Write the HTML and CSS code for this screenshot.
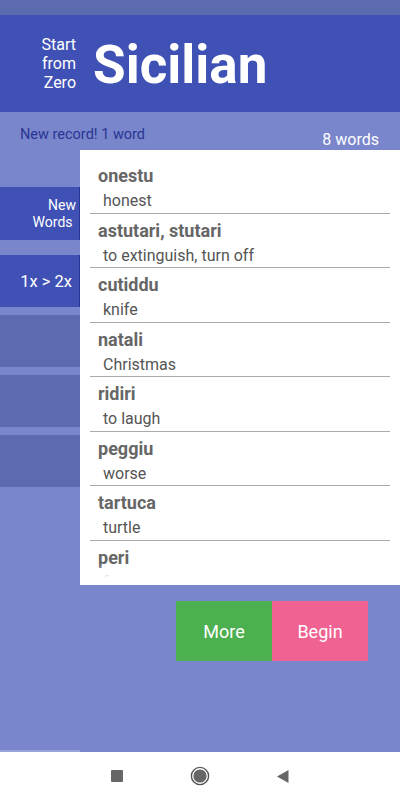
FILE: index.html
```html
<!DOCTYPE html>
<html lang="en">
<head>
    <meta charset="UTF-8">
    <meta name="viewport" content="width=device-width, initial-scale=1.0">
    <title>Start from Zero - Sicilian</title>
    <link rel="stylesheet" href="styles.css">
</head>
<body>
    <div class="status-bar"></div>

    <div class="header">
        <div class="header-small">Start<br>from<br>Zero</div>
        <h1 class="header-title">Sicilian</h1>
    </div>

    <div class="info-row">
        <span class="record">New record! 1 word</span>
        <span class="word-count">8 words</span>
    </div>

    <div class="main">
        <div class="side">
            <div class="tab tab-active tab-first">New<br>Words&nbsp;</div>
            <div class="tab tab-active tab-big">1x &gt; 2x&nbsp;</div>
            <div class="tab"></div>
            <div class="tab"></div>
            <div class="tab"></div>
        </div>

        <div class="content">
            <div class="panel">
                <div class="word-list">
                    <div class="word-item">
                        <div class="word-name">onestu</div>
                        <div class="word-meaning">honest</div>
                    </div>
                    <div class="word-item">
                        <div class="word-name">astutari, stutari</div>
                        <div class="word-meaning">to extinguish, turn off</div>
                    </div>
                    <div class="word-item">
                        <div class="word-name">cutiddu</div>
                        <div class="word-meaning">knife</div>
                    </div>
                    <div class="word-item">
                        <div class="word-name">natali</div>
                        <div class="word-meaning">Christmas</div>
                    </div>
                    <div class="word-item">
                        <div class="word-name">ridiri</div>
                        <div class="word-meaning">to laugh</div>
                    </div>
                    <div class="word-item">
                        <div class="word-name">peggiu</div>
                        <div class="word-meaning">worse</div>
                    </div>
                    <div class="word-item">
                        <div class="word-name">tartuca</div>
                        <div class="word-meaning">turtle</div>
                    </div>
                    <div class="word-item">
                        <div class="word-name">peri</div>
                        <div class="word-meaning">feet</div>
                    </div>
                </div>
            </div>

            <div class="buttons">
                <button class="btn btn-more">More</button>
                <button class="btn btn-begin">Begin</button>
            </div>
        </div>
    </div>

    <!-- android navigation bar -->
    <div class="nav-bar">
        <div class="nav-item">
            <svg width="12" height="12" viewBox="0 0 12 12"><rect x="0" y="0" width="12" height="12" rx="1" fill="#666"/></svg>
        </div>
        <div class="nav-item">
            <svg width="20" height="20" viewBox="0 0 20 20">
                <circle cx="10" cy="10" r="8.6" fill="none" stroke="#555" stroke-width="1.4"/>
                <circle cx="10" cy="10" r="6.6" fill="#666"/>
            </svg>
        </div>
        <div class="nav-item">
            <svg width="12" height="13" viewBox="0 0 12 13"><path d="M0 6.5 L11.5 0 L11.5 13 Z" fill="#666"/></svg>
        </div>
    </div>
</body>
</html>
```

FILE: styles.css
```css
/* base */
html, body {
    margin: 0;
    padding: 0;
}
body {
    width: 400px;
    height: 800px;
    display: flex;
    flex-direction: column;
    background: #7986cb;
    font-family: Roboto, "Noto Sans", sans-serif;
    overflow: hidden;
}

.status-bar {
    height: 15px;
    background: #5c6bb0;
}

/* header */
.header {
    height: 97px;
    background: #3f51b5;
    display: flex;
    align-items: center;
    color: #fff;
}
.header-small {
    width: 76px;
    text-align: right;
    font-size: 16px;
    line-height: 19px;
}
.header-title {
    margin: 0 0 0 17px;
    font-size: 53px;
    font-weight: 700;
    line-height: 60px;
    padding-top: 2px;
}

/* record / count row */
.info-row {
    height: 38px;
    display: flex;
    justify-content: space-between;
}
.record {
    padding: 14px 0 0 20px;
    font-size: 14.5px;
    line-height: 17px;
    color: #283593;
}
.word-count {
    align-self: flex-end;
    margin: 0 21px 1px 0;
    font-size: 16px;
    line-height: 19px;
    color: #fff;
}

.main {
    flex: 1;
    display: flex;
}

/* left tabs */
.side {
    width: 80px;
    padding-top: 37px;
    display: flex;
    flex-direction: column;
    gap: 8px;
    border-bottom: 2px solid #9aa4dc;
}
.tab {
    height: 52px;
    background: #5c6bb0;
    display: flex;
    align-items: center;
    justify-content: flex-end;
    padding-right: 4px;
    text-align: right;
    color: #fff;
    font-size: 14px;
    line-height: 17px;
}
.tab-active {
    background: #3f51b5;
    border-right: 1px solid #283593;
    padding-right: 3px;
}
.tab-first {
    height: 53px;
    margin-bottom: 7px;
}
.tab-big {
    font-size: 16.5px;
}

/* word panel */
.content {
    flex: 1;
}
.panel {
    height: 435px;
    background: #fff;
}
.word-list {
    position: relative;
    height: 428px;
    padding-top: 9px;
    box-sizing: border-box;
    overflow: hidden;
}
.word-list::after {
    content: "";
    position: absolute;
    left: 0;
    right: 0;
    bottom: 0;
    height: 14px;
    background: linear-gradient(rgba(255, 255, 255, 0), #fff);
}
.word-item {
    margin: 0 10px;
    padding: 6px 0 0.5px;
    border-bottom: 1px solid #aaa;
}
.word-name {
    padding-left: 8px;
    font-size: 18px;
    font-weight: 700;
    line-height: 22px;
    color: #666;
}
.word-meaning {
    margin-top: 3px;
    padding-left: 13px;
    font-size: 16px;
    line-height: 22px;
    color: #555;
}

/* buttons */
.buttons {
    display: flex;
    justify-content: flex-end;
    padding: 16px 32px 0 0;
}
.btn {
    width: 96px;
    height: 60px;
    border: none;
    margin: 0;
    color: #fff;
    font-family: Roboto, "Noto Sans", sans-serif;
    font-size: 18px;
}
.btn-more {
    background: #4caf50;
}
.btn-begin {
    background: #f06292;
}

/* nav bar */
.nav-bar {
    height: 48px;
    background: #fff;
    display: flex;
    justify-content: center;
    align-items: center;
    gap: 43px;
}
.nav-item {
    width: 40px;
    display: flex;
    justify-content: center;
    align-items: center;
}
```
